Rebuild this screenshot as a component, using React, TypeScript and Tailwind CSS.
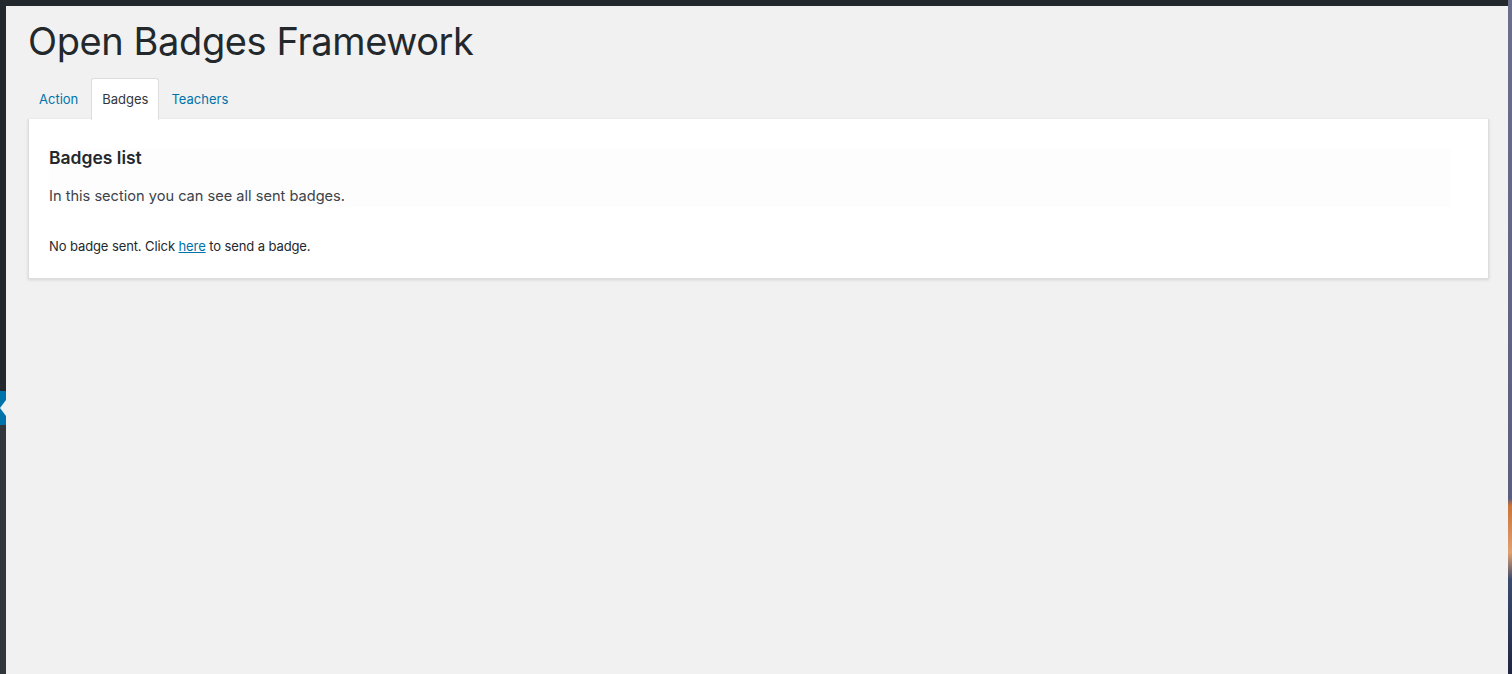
import React from "react";

export default function App() {
  return (
    <div
      className="flex h-[674px] w-[1512px] overflow-hidden bg-[#f1f1f1]"
      style={{ fontFamily: 'Inter, "Liberation Sans", sans-serif' }}
    >
      {/* left admin menu edge */}
      <div className="flex w-[6px] shrink-0 flex-col">
        <div className="h-[391px] bg-[#23282d]" />
        <div className="h-[34px] bg-[#0073aa]">
          <svg width="6" height="34" viewBox="0 0 6 34" className="block">
            <polygon points="6,9 0,17 6,25" fill="#f1f1f1" />
          </svg>
        </div>
        <div className="flex-1 bg-[#32373c]" />
      </div>

      {/* main */}
      <div className="flex min-w-0 flex-1 flex-col">
        <div className="h-[6px] shrink-0 bg-[#23282d]" />
        <div className="flex-1 pl-[22px] pr-[19px]">
          <h1 className="mt-[11px] text-[38px] leading-[48px] font-normal tracking-[-0.4px] text-[#23282d]">
            Open Badges Framework
          </h1>

          <div className="mt-[13px] flex h-[42px] items-end border-b border-[#ccc] pl-[1px]">
            <a className="flex h-[41px] items-center pt-[2px] pl-[10px] pr-[13px] text-[13px] text-[#0073aa]">
              Action
            </a>
            <a className="-mb-px flex h-[42px] items-center rounded-t-[3px] border border-b-0 border-[#ddd] bg-white px-[10px] pt-[1px] text-[13px] text-[#32373c]">
              Badges
            </a>
            <a className="flex h-[41px] items-center pt-[2px] pl-[12px] pr-[10px] text-[13px] text-[#0073aa]">
              Teachers
            </a>
          </div>

          <div className="-mt-px h-[160px] border border-t-0 border-[#ddd] bg-white px-[20px] pt-[29px] shadow-[0_1px_3px_rgba(0,0,0,0.12)]">
            <div className="mr-[17px] h-[59px] bg-[#fdfdfd]">
              <h2 className="pt-[1px] text-[17.5px] leading-[18px] font-semibold text-[#23282d]">
                Badges list
              </h2>
              <p className="mt-[19px] text-[14.6px] leading-[20px] text-[#3c434a]">
                In this section you can see all sent badges.
              </p>
            </div>
            <p className="mt-[30px] text-[13px] leading-[18px] tracking-[-0.1px] text-[#23282d]">
              No badge sent. Click{" "}
              <a className="text-[#0073aa] underline">here</a> to send a badge.
            </p>
          </div>
        </div>
      </div>

      {/* right desktop edge */}
      <div className="w-[4px] shrink-0 bg-[linear-gradient(to_bottom,#6a6f8e_0%,#5a5f80_74%,#c9743a_75%,#e0a070_82%,#3c4a70_86%,#1f2640_100%)]" />
    </div>
  );
}
